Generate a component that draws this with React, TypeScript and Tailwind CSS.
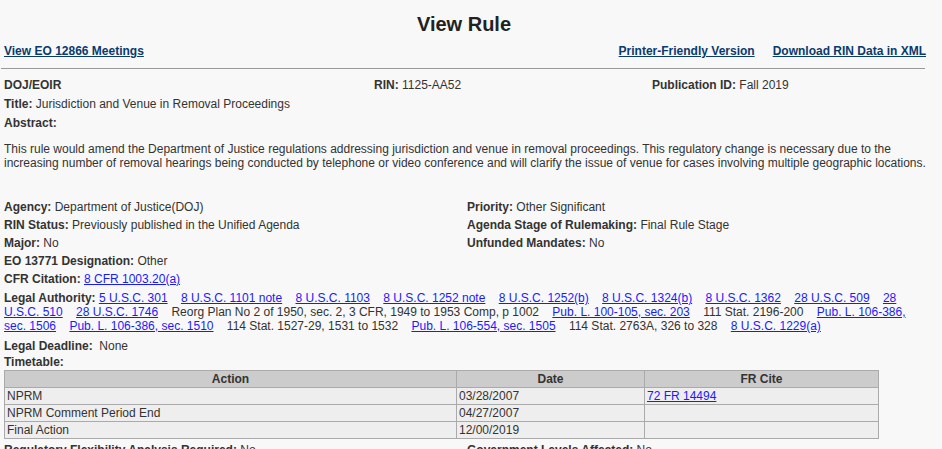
import React from 'react';

const A: React.FC<{ children: React.ReactNode }> = ({ children }) => (
  <a href="#" className="text-[#1a1aff] underline underline-offset-[1px]">{children}</a>
);

const Field: React.FC<{ label: string; children: React.ReactNode; className?: string }> = ({ label, children, className }) => (
  <div className={`leading-[18px] whitespace-nowrap ${className ?? ''}`}>
    <span className="font-bold">{label}</span> {children}
  </div>
);

const authority: { text: string; link: boolean }[] = [
  { text: '5 U.S.C. 301', link: true },
  { text: '8 U.S.C. 1101 note', link: true },
  { text: '8 U.S.C. 1103', link: true },
  { text: '8 U.S.C. 1252 note', link: true },
  { text: '8 U.S.C. 1252(b)', link: true },
  { text: '8 U.S.C. 1324(b)', link: true },
  { text: '8 U.S.C. 1362', link: true },
  { text: '28 U.S.C. 509', link: true },
  { text: '28 U.S.C. 510', link: true },
  { text: '28 U.S.C. 1746', link: true },
  { text: 'Reorg Plan No 2 of 1950, sec. 2, 3 CFR, 1949 to 1953 Comp, p 1002', link: false },
  { text: 'Pub. L. 100-105, sec. 203', link: true },
  { text: '111 Stat. 2196-200', link: false },
  { text: 'Pub. L. 106-386, sec. 1506', link: true },
  { text: 'Pub. L. 106-386, sec. 1510', link: true },
  { text: '114 Stat. 1527-29, 1531 to 1532', link: false },
  { text: 'Pub. L. 106-554, sec. 1505', link: true },
  { text: '114 Stat. 2763A, 326 to 328', link: false },
  { text: '8 U.S.C. 1229(a)', link: true },
];

const timetable = [
  { action: 'NPRM', date: '03/28/2007', cite: '72 FR 14494' },
  { action: 'NPRM Comment Period End', date: '04/27/2007', cite: '' },
  { action: 'Final Action', date: '12/00/2019', cite: '' },
];

const App: React.FC = () => {
  return (
    <div className="min-h-screen bg-[#f8f8f8] text-[#333] text-[12px] overflow-hidden" style={{ fontFamily: '"Liberation Sans", Arial, sans-serif' }}>
      <div className="w-[928px] h-[449px] overflow-hidden">
        {/* Header */}
        <h1 className="pt-[12px] text-center text-[20px] leading-[24px] font-bold text-[#222]">View Rule</h1>
        <div className="mt-[8px] flex items-center justify-between pl-[4px] pr-[2px] leading-[14px] font-bold text-[#0a3a6e]">
          <a href="#" className="underline">View EO 12866 Meetings</a>
          <div className="flex gap-[18px]">
            <a href="#" className="underline">Printer-Friendly Version</a>
            <a href="#" className="underline">Download RIN Data in XML</a>
          </div>
        </div>
        <div className="mt-[10px] ml-[1px] w-[924px] h-[1px] bg-[#9a9a9a]" />

        <div className="px-[4px]">
          <div className="mt-[7px] grid grid-cols-[370px_278px_1fr] leading-[19px]">
            <div className="font-bold">DOJ/EOIR</div>
            <div><span className="font-bold">RIN:</span> 1125-AA52</div>
            <div><span className="font-bold">Publication ID:</span> Fall 2019</div>
          </div>
          <div className="leading-[19px]"><span className="font-bold">Title:</span> Jurisdiction and Venue in Removal Proceedings</div>
          <div className="leading-[19px] font-bold">Abstract:</div>
          <p className="mt-[9px] leading-[14px] w-[926px]">
            This rule would amend the Department of Justice regulations addressing jurisdiction and venue in removal proceedings. This regulatory change is necessary due to the increasing number of removal hearings being conducted by telephone or video conference and will clarify the issue of venue for cases involving multiple geographic locations.
          </p>

          <div className="mt-[28px] grid grid-cols-[463px_1fr]">
            <Field label="Agency:">Department of Justice(DOJ)</Field>
            <Field label="Priority:">Other Significant</Field>
            <Field label="RIN Status:">Previously published in the Unified Agenda</Field>
            <Field label="Agenda Stage of Rulemaking:">Final Rule Stage</Field>
            <Field label="Major:">No</Field>
            <Field label="Unfunded Mandates:">No</Field>
          </div>
          <Field label="EO 13771 Designation:">Other</Field>
          <Field label="CFR Citation:"><A>8 CFR 1003.20(a)</A></Field>

          <div className="mt-[3px] leading-[14px] w-[912px]">
            <span className="font-bold">Legal Authority: </span>
            {authority.map((item, i) => (
              <React.Fragment key={i}>
                {item.link ? <A>{item.text}</A> : <span>{item.text}</span>}
                {'\u00a0\u00a0\u00a0 '}
              </React.Fragment>
            ))}
          </div>

          <div className="mt-[4px] leading-[18px]"><span className="font-bold">Legal Deadline:</span>&nbsp; None</div>
          <div className="leading-[15px] font-bold">Timetable:</div>

          <table className="border-collapse table-fixed w-[875px]">
            <colgroup>
              <col className="w-[452px]" />
              <col className="w-[188px]" />
              <col />
            </colgroup>
            <thead>
              <tr className="bg-[#cccccc]">
                <th className="border border-[#aaa] h-[17px] p-0 leading-[15px] font-bold">Action</th>
                <th className="border border-[#aaa] h-[17px] p-0 leading-[15px] font-bold">Date</th>
                <th className="border border-[#aaa] h-[17px] p-0 leading-[15px] font-bold">FR Cite</th>
              </tr>
            </thead>
            <tbody>
              {timetable.map((r) => (
                <tr key={r.action} className="bg-[#eeeeee]">
                  <td className="border border-[#aaa] h-[17px] py-0 px-[2px] leading-[15px]">{r.action}</td>
                  <td className="border border-[#aaa] h-[17px] py-0 px-[2px] leading-[15px]">{r.date}</td>
                  <td className="border border-[#aaa] h-[17px] py-0 px-[2px] leading-[15px]">{r.cite && <A>{r.cite}</A>}</td>
                </tr>
              ))}
            </tbody>
          </table>

          <div className="mt-[2px] grid grid-cols-[463px_1fr]">
            <Field label="Regulatory Flexibility Analysis Required:">No</Field>
            <Field label="Government Levels Affected:">No</Field>
          </div>
        </div>
      </div>
    </div>
  );
};

export default App;
